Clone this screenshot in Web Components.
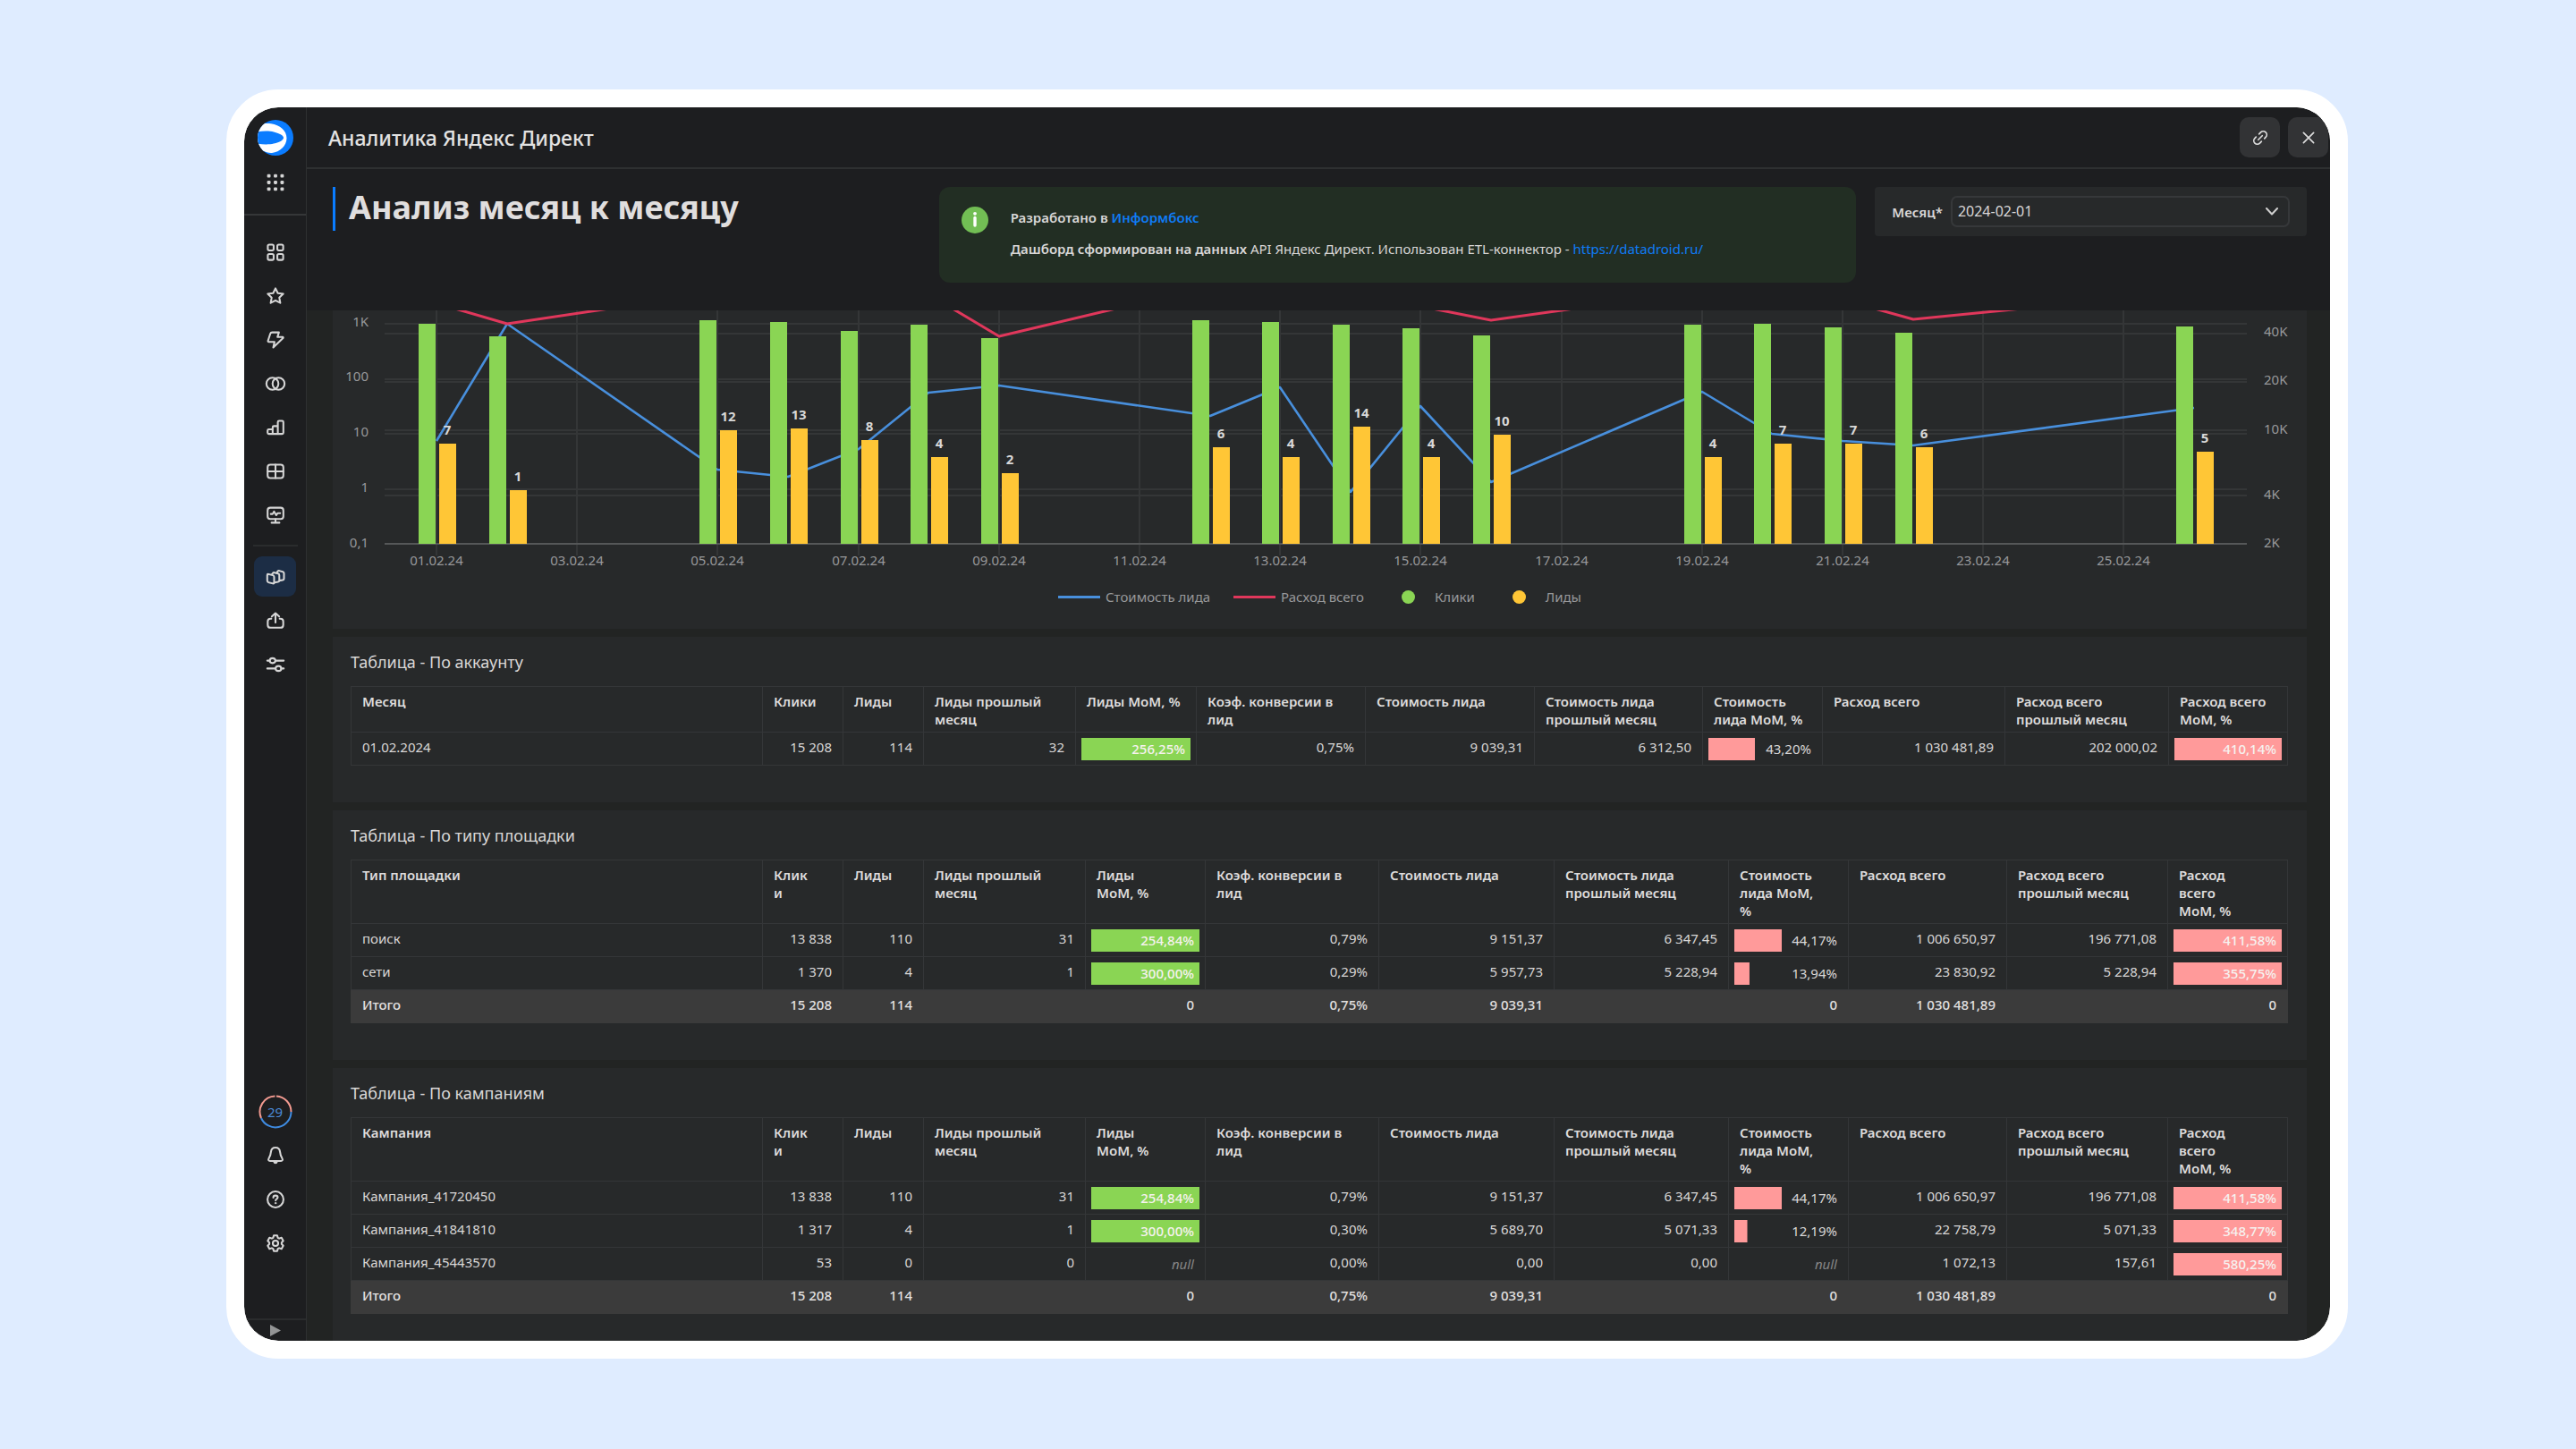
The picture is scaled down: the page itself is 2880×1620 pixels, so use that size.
<!DOCTYPE html>
<html lang="ru">
<head>
<meta charset="utf-8">
<title>Аналитика Яндекс Директ</title>
<style>
  html { height: 100%; }
  body {
    margin: 0;
    height: 100vh;
    box-sizing: border-box;
    padding: 100px 255px 101px 253px;
    background: #dfecff;
    color: #d9d7d7;
    font-family: "Noto Sans", "Open Sans", sans-serif;
    font-size: 15px;
    line-height: 20px;
    --bg: #1d1e20;
    --canvas: #222423;
    --panel: #27292a;
    --line: #2e3031;
    --link: #0f7bf5;
    --green: #8ad554;
    --yellow: #ffc636;
    --pink: #ff9a9a;
  }
</style>
</head>
<body>
<app-shell>
  <side-bar slot="side"></side-bar>
  <page-header slot="top">Аналитика Яндекс Директ</page-header>
  <title-bar slot="top">
    <span slot="title">Анализ месяц к месяцу</span>
    <info-note></info-note>
    <month-select label="Месяц*" value="2024-02-01"></month-select>
  </title-bar>
  <month-chart></month-chart>
  <data-panel heading="Таблица - По аккаунту"><data-grid source="account"></data-grid></data-panel>
  <data-panel heading="Таблица - По типу площадки"><data-grid source="place"></data-grid></data-panel>
  <data-panel heading="Таблица - По кампаниям"><data-grid source="campaign"></data-grid></data-panel>
</app-shell>

<script>
class AppShell extends HTMLElement {
  connectedCallback() {
    this.attachShadow({ mode: 'open' });
    this.shadowRoot.innerHTML = `
      <style>
        :host {
          display: grid;
          grid-template-columns: 70px 1fr;
          height: 100%;
          box-sizing: border-box;
          border: 20px solid #fff;
          border-radius: 58px;
          background: #fff;
          overflow: hidden;
        }
        .side, main { min-height: 0; overflow: hidden; }
        .side { border-radius: 38px 0 0 38px; background: var(--bg); display: grid; }
        main { border-radius: 0 38px 38px 0; background: var(--canvas); min-width: 0; }
        .top { background: var(--bg); }
        .cards {
          display: flex;
          flex-direction: column;
          gap: 9px;
          padding: 0 26px 0 29px;
        }
      </style>
      <div class="side"><slot name="side"></slot></div>
      <main>
        <div class="top"><slot name="top"></slot></div>
        <div class="cards"><slot></slot></div>
      </main>
    `;
  }
}
customElements.define('app-shell', AppShell);

const ICONS = {
  apps: '<g fill="currentColor" stroke="none">' + [2.6, 8, 13.4].map(y => [2.6, 8, 13.4].map(x => `<rect x="${x - 1.4}" y="${y - 1.4}" width="2.8" height="2.8" rx=".8"/>`).join('')).join('') + '</g>',
  cells: '<rect x="1.75" y="1.75" width="4.75" height="4.75" rx="1.2"/><rect x="9.5" y="1.75" width="4.75" height="4.75" rx="1.2"/><rect x="1.75" y="9.5" width="4.75" height="4.75" rx="1.2"/><rect x="9.5" y="9.5" width="4.75" height="4.75" rx="1.2"/>',
  star: '<path d="M8 1.7 9.9 5.6 14.3 6.2 11.1 9.2 11.9 13.6 8 11.5 4.1 13.6 4.9 9.2 1.7 6.2 6.1 5.6Z"/>',
  bolt: '<path d="M5.3 1.9h5.5L9.6 5.7h4.2c.5 0 .7.6.3.9L6.2 14.2l1-4.6H2.6c-.5 0-.8-.4-.7-.9l1.900-5.800c.2-.6.8-1 1.500-1Z"/>',
  rings: '<circle cx="5.5" cy="8" r="4.9"/><circle cx="10.5" cy="8" r="4.9"/>',
  bars: '<path d="M5.7 13.2H2.6c-.6 0-1-.4-1-1v-1.8c0-.6.4-1 1-1h3.1ZM5.7 13.2V7.8c0-.6.4-1 1-1h3.2v6.400ZM9.900 13.200V3.600c0-.6.4-1 1-1h2.500c.6 0 1 .4 1 1v8.600c0 .6-.4 1-1 1Z"/>',
  table: '<rect x="1.6" y="2.5" width="12.8" height="11" rx="2.2"/><path d="M8 2.5v11M1.6 8h12.8"/>',
  monitor: '<rect x="1.6" y="1.9" width="12.8" height="9.2" rx="2.2"/><path d="M4.2 7h1.5l1.1-2 1.8 3 1.1-1.600h2.100M8 11.200v2.600M4.800 14.100h6.400"/>',
  workbooks: '<rect x="-2.700" y="-3.400" width="5.600" height="6.800" rx="1.300" transform="translate(4 9.500) skewY(14)"/><path d="M5.200 5.700 6 4.800c.3-.3.700-.4 1.100-.3l3 .8c.6.2 1 .7 1 1.300v4.300c0 .6-.4 1-1 1.100L7.300 12.600M9.300 4.800l-.1-.6.700-.9c.3-.3.700-.4 1.100-.3l2.900.8c.6.2 1 .7 1 1.300v4.300c0 .6-.4 1-1 1.100l-2.700.5"/>',
  share: '<path d="M4.600 6.300H4c-1.300 0-2.300 1-2.300 2.300v2.800c0 1.300 1 2.300 2.300 2.300h8c1.300 0 2.300-1 2.300-2.300V8.600c0-1.300-1-2.300-2.300-2.300h-.6M8 9.500V1.900M5 4.600l3-2.800 3 2.800"/>',
  sliders: '<path d="M1.300 4.800h2M8 4.800h6.700M1.300 11.200h6.700M12.700 11.200h2"/><ellipse cx="5.600" cy="4.800" rx="2.300" ry="2"/><ellipse cx="10.400" cy="11.200" rx="2.300" ry="2"/>',
  bell: '<path d="M8 1.500c-2.200 0-3.500 1.500-3.700 3.500-.2 2.300-.5 3.400-1.700 5.200-.8 1.200-.2 2.200 1 2.200h8.800c1.200 0 1.800-1 1-2.200-1.200-1.800-1.500-2.900-1.700-5.200C11.500 3 10.200 1.500 8 1.500Z"/><path d="M6 12.800c.4 1.500 1 2 2 2s1.600-.5 2-2Z" fill="currentColor" stroke="none"/>',
  help: '<circle cx="8" cy="8" r="6.500"/><path d="M6.200 6.500c0-1 .8-1.700 1.800-1.700s1.800.7 1.800 1.600c0 1.100-1.700 1.300-1.700 2.400"/><circle cx="8.050" cy="11" r=".6" fill="currentColor" stroke-width=".5"/>',
  gear: '<circle cx="8" cy="8" r="2.200"/><path d="M6.600 1.600h2.800l.5 1.900 1.100.6 1.900-.6 1.400 2.500L13 7.400v1.200l1.300 1.400-1.400 2.500-1.900-.6-1.100.6-.5 1.900H6.600l-.5-1.900-1.100-.6-1.900.6L1.700 10 3 8.600V7.400L1.700 6l1.400-2.500 1.900.6 1.100-.6Z"/>',
  link: '<path d="M6.800 4.300 8.500 2.600a3.400 3.400 0 0 1 4.900 4.900l-1.200 1.200M9.200 11.700l-1.700 1.700a3.400 3.400 0 0 1-4.900-4.900l1.200-1.200M6 10l4-4"/>',
  close: '<path d="M3 3l10 10M13 3 3 13"/>'
};
const icon = (name, size = 22) =>
  `<svg width="${size}" height="${size}" viewBox="0 0 16 16" fill="none" stroke="currentColor" stroke-width="1.5" stroke-linejoin="round" stroke-linecap="round" overflow="visible" aria-hidden="true">${ICONS[name]}</svg>`;

class SideBar extends HTMLElement {
  connectedCallback() {
    const item = (name, label, cls = '') => `<button class="${cls}" aria-label="${label}">${icon(name)}</button>`;
    this.attachShadow({ mode: 'open' });
    this.shadowRoot.innerHTML = `
      <style>
        :host {
          display: flex;
          flex-direction: column;
          box-sizing: border-box;
          border-right: 1px solid var(--line);
        }
        .logo { display: grid; justify-content: center; padding-top: 14px; height: 40px; }
        nav, .foot {
          display: flex;
          flex-direction: column;
          align-items: center;
          gap: 4px;
        }
        .brand { border-bottom: 2px solid #353738; padding: 7px 0 13px; }
        .main { padding-top: 18px; }
        button {
          display: grid;
          place-items: center;
          width: 47px;
          height: 45px;
          padding: 0;
          border: 0;
          border-radius: 9px;
          background: none;
          color: #d6d6d6;
          font: inherit;
        }
        button.active { background: #1c2d45; }
        hr { width: 50px; margin: 7px 0; border: 0; border-top: 2px solid #2a2c2d; }
        .foot { margin-top: auto; }
        .ring { color: #4b8bd8; }
        .ring svg, .ring span { grid-area: 1 / 1; }
        .expand {
          width: 100%;
          height: 25px;
          margin-top: 62px;
          border-top: 2px solid #2a2c2d;
          border-radius: 0;
          color: #949596;
        }
      </style>
      <a class="logo" href="#" aria-label="DataLens">
        <svg width="40" height="40" viewBox="0 0 40 40">
          <defs><clipPath id="disc"><circle cx="20" cy="20" r="20"/></clipPath></defs>
          <g clip-path="url(#disc)">
            <rect width="40" height="40" fill="#0a7cff"/>
            <path d="M-2 6C4 4 10 3.500 15 4.200 25 5.500 32.500 12 32.500 20.500S25 36 16 37C10 37.500 4 34 -2 30Z" fill="#fff"/>
            <path d="M-2 13.500C6 12.200 13 12 18 13.500 25 15.500 29 17.500 29 20s-4 5-11 6.500C13 27.800 6 27.600 -2 26.500Z" fill="#0a7cff"/>
          </g>
        </svg>
      </a>
      <nav class="brand">${item('apps', 'Сервисы')}</nav>
      <nav class="main">
        ${item('cells', 'Коллекции')}
        ${item('star', 'Избранное')}
        ${item('bolt', 'Подключения')}
        ${item('rings', 'Датасеты')}
        ${item('bars', 'Чарты')}
        ${item('table', 'Дашборды')}
        ${item('monitor', 'Мониторинг')}
        <hr>
        ${item('workbooks', 'Воркбуки', 'active')}
        ${item('share', 'Экспорт')}
        ${item('sliders', 'Параметры')}
      </nav>
      <div class="foot">
        <button class="ring" aria-label="Дни">
          <svg width="38" height="38" viewBox="0 0 38 38" fill="none" stroke-width="2">
            <path d="M20 1.500A17.500 17.500 0 0 1 36.500 19" stroke="#f29a90"/>
            <path d="M36.500 19A17.500 17.500 0 0 1 3 26" stroke="#3f8be0"/>
            <path d="M3 26A17.500 17.500 0 0 1 18.500 1.500" stroke="#f29a90"/>
          </svg>
          <span>29</span>
        </button>
        ${item('bell', 'Уведомления')}
        ${item('help', 'Помощь')}
        ${item('gear', 'Настройки')}
      </div>
      <button class="expand" aria-label="Развернуть">
        <svg width="12" height="13" viewBox="0 0 12 13"><path d="M0 0 12 6.500 0 13Z" fill="currentColor"/></svg>
      </button>
    `;
  }
}
customElements.define('side-bar', SideBar);

class PageHeader extends HTMLElement {
  connectedCallback() {
    this.attachShadow({ mode: 'open' });
    this.shadowRoot.innerHTML = `
      <style>
        :host {
          display: flex;
          align-items: center;
          gap: 9px;
          height: 67px;
          padding: 0 2px 0 24px;
          border-bottom: 2px solid var(--line);
        }
        h1 { flex: 1; margin: 0; font-size: 23px; line-height: 32px; font-weight: 500; color: #e2e2e2; }
        button {
          display: grid;
          place-items: center;
          width: 45px;
          height: 45px;
          padding: 0;
          border: 0;
          border-radius: 10px;
          background: #323335;
          color: #dcdcdc;
        }
      </style>
      <h1><slot></slot></h1>
      <button aria-label="Скопировать ссылку">${icon('link', 18)}</button>
      <button aria-label="Закрыть">${icon('close', 18)}</button>
    `;
  }
}
customElements.define('page-header', PageHeader);

class TitleBar extends HTMLElement {
  connectedCallback() {
    this.attachShadow({ mode: 'open' });
    this.shadowRoot.innerHTML = `
      <style>
        :host {
          display: grid;
          grid-template-columns: 657fr 1026fr 483fr;
          column-gap: 21px;
          align-items: start;
          height: 138px;
          padding: 20px 26px 0 29px;
        }
        h2 {
          margin: 0;
          padding: 0 0 3px 15px;
          border-left: 3px solid #0a7cff;
          font-size: 36px;
          line-height: 46px;
          font-weight: 700;
          color: #e0dede;
        }
      </style>
      <h2><slot name="title"></slot></h2>
      <slot></slot>
    `;
  }
}
customElements.define('title-bar', TitleBar);

class InfoNote extends HTMLElement {
  connectedCallback() {
    this.attachShadow({ mode: 'open' });
    this.shadowRoot.innerHTML = `
      <style>
        :host {
          display: flex;
          gap: 25px;
          padding: 22px 25px 25px;
          border-radius: 12px;
          background: #222e23;
        }
        p { margin: 0 0 10px; line-height: 25px; }
        p:last-child { margin: 0; }
        b { font-weight: 600; }
        a { color: var(--link); text-decoration: none; }
      </style>
      <svg width="30" height="30" viewBox="0 0 30 30" aria-hidden="true">
        <circle cx="15" cy="15" r="15" fill="#72be54"/>
        <path d="M15 12.500v8.500" stroke="#fff" stroke-width="3.400" stroke-linecap="round"/>
        <circle cx="15" cy="7.800" r="1.900" fill="#fff"/>
      </svg>
      <div>
        <p><b>Разработано в <a href="#">Информбокс</a></b></p>
        <p><b>Дашборд сформирован на данных</b> API Яндекс Директ. Использован ETL-коннектор - <a href="#">https://datadroid.ru/</a></p>
      </div>
    `;
  }
}
customElements.define('info-note', InfoNote);

class MonthSelect extends HTMLElement {
  connectedCallback() {
    this.attachShadow({ mode: 'open' });
    this.shadowRoot.innerHTML = `
      <style>
        :host {
          display: flex;
          align-items: center;
          gap: 9px;
          padding: 10px 19px;
          border-radius: 4px;
          background: var(--panel);
        }
        label { font-weight: 600; }
        .box { flex: 1; display: grid; align-items: center; }
        select {
          grid-area: 1 / 1;
          appearance: none;
          width: 100%;
          height: 35px;
          padding: 0 6px 2px;
          border: 2px solid #36383a;
          border-radius: 7px;
          background: none;
          color: inherit;
          font: inherit;
          font-size: 16px;
        }
        svg { grid-area: 1 / 1; justify-self: end; margin-right: 13px; pointer-events: none; }
      </style>
      <label for="month">${this.getAttribute('label')}</label>
      <div class="box">
        <select id="month"><option>${this.getAttribute('value')}</option></select>
        <svg width="14" height="9" viewBox="0 0 14 9" fill="none" stroke="#cfcfcf" stroke-width="2" stroke-linecap="round" stroke-linejoin="round"><path d="M1 1l6 6.500L13 1"/></svg>
      </div>
    `;
  }
}
customElements.define('month-select', MonthSelect);

// day of month, y of the clicks bar top, leads
const DAYS = [
  [1, 15, 7], [2, 29, 1], [5, 11, 12], [6, 13, 13], [7, 23, 8], [8, 16, 4], [9, 31, 2],
  [12, 11, 6], [13, 13, 4], [14, 16, 14], [15, 20, 4], [16, 28, 10],
  [19, 16, 4], [20, 15, 7], [21, 19, 7], [22, 25, 6], [26, 18, 5]
];
const LEAD_COST = [[1, 146], [2, 15], [5, 178], [6, 186], [7, 155], [8, 92], [9, 84], [12, 118], [13, 86],
  [14, 203], [15, 107], [16, 192], [19, 91], [20, 138], [21, 146], [22, 151], [26, 109]];
// total cost runs above the visible part between these dips
const SPEND = [[1, -8], [2, 15], [5, -20], [8, -18], [9, 29], [12, -27], [14, -20], [16, 11], [19, -22], [21, -12], [22, 10], [26, -21]];

class MonthChart extends HTMLElement {
  connectedCallback() {
    const x = day => Math.round(116 + 78.6 * (day - 1));
    const base = 261;
    const line = (pts, color, w) => `<polyline points="${pts.map(([d, y]) => x(d) + ',' + y).join(' ')}" fill="none" stroke="${color}" stroke-width="${w}" stroke-linejoin="round"/>`;
    const rules = [15, 26, 77, 80, 134, 138, 200, 207]
      .map(y => `<path d="M58 ${y}H2140" stroke="#343637" stroke-width="2"/>`).join('');
    const ticks = [1, 3, 5, 7, 9, 11, 13, 15, 17, 19, 21, 23, 25].map(d => `
      <path d="M${x(d)} 0V274" stroke="#343637" stroke-width="2"/>
      <text x="${x(d)}" y="285" text-anchor="middle">${String(d).padStart(2, '0')}.02.24</text>`).join('');
    const bars = DAYS.map(([d, top, leads]) => {
      const y = Math.round(201 - 62 * Math.log10(leads));
      return `
        <rect x="${x(d) - 20}" y="${top}" width="19" height="${base - top}" fill="var(--green)"/>
        <rect x="${x(d) + 3}" y="${y}" width="19" height="${base - y}" fill="var(--yellow)"/>
        <text class="val" x="${x(d) + 12}" y="${y - 10}" text-anchor="middle">${leads}</text>`;
    }).join('');
    const left = [['1K', 18], ['100', 79], ['10', 141], ['1', 203], ['0,1', 265]]
      .map(([t, y]) => `<text x="40" y="${y}" text-anchor="end">${t}</text>`).join('');
    const right = [['40K', 29], ['20K', 83], ['10K', 138], ['4K', 211], ['2K', 265]]
      .map(([t, y]) => `<text x="2159" y="${y}">${t}</text>`).join('');

    this.attachShadow({ mode: 'open' });
    this.shadowRoot.innerHTML = `
      <style>
        :host { display: block; background: var(--panel); color: #97989a; padding-bottom: 26px; }
        svg { display: block; width: 100%; }
        text { fill: currentColor; }
        .val { fill: #d8d8d8; font-weight: 700; }
        ul {
          display: flex;
          justify-content: center;
          gap: 26px;
          margin: 0;
          padding: 0;
          list-style: none;
        }
        li { display: flex; align-items: center; gap: 6px; }
        i { width: 47px; height: 3px; background: var(--c); }
        i.dot { width: 15px; height: 15px; margin: 0 16px; border-radius: 50%; }
      </style>
      <svg viewBox="0 0 2207 310" role="img" aria-label="Клики, лиды и расходы по дням">
        ${rules}${ticks}
        <path d="M58 261H2140" stroke="#555758" stroke-width="2"/>
        ${line(LEAD_COST, '#488fdc', 2.6)}${line(SPEND, '#e0375b', 3)}
        ${bars}${left}${right}
      </svg>
      <ul>
        <li><i style="--c: #488fdc"></i>Стоимость лида</li>
        <li><i style="--c: #e0375b"></i>Расход всего</li>
        <li><i class="dot" style="--c: var(--green)"></i>Клики</li>
        <li><i class="dot" style="--c: var(--yellow)"></i>Лиды</li>
      </ul>
    `;
  }
}
customElements.define('month-chart', MonthChart);

class DataPanel extends HTMLElement {
  connectedCallback() {
    this.attachShadow({ mode: 'open' });
    this.shadowRoot.innerHTML = `
      <style>
        :host { display: block; padding: 16px 22px 41px 20px; background: var(--panel); }
        h3 { margin: 0 0 15px; font-size: 18px; line-height: 24px; font-weight: 400; }
      </style>
      <h3>${this.getAttribute('heading')}</h3>
      <slot></slot>
    `;
  }
}
customElements.define('data-panel', DataPanel);

const METRICS = ['Клики', 'Лиды', 'Лиды прошлый месяц', 'Лиды MoM, %', 'Коэф. конверсии в лид', 'Стоимость лида',
  'Стоимость лида прошлый месяц', 'Стоимость лида MoM, %', 'Расход всего', 'Расход всего прошлый месяц', 'Расход всего MoM, %'];
const NARROW = { 'Клики': 'Клик\nи', 'Лиды MoM, %': 'Лиды\nMoM, %', 'Стоимость лида MoM, %': 'Стоимость\nлида MoM,\n%', 'Расход всего MoM, %': 'Расход\nвсего\nMoM, %' };
const WIDE = [460, 90, 90, 181, 134, 194, 196, 195, 134, 177, 180, 134];
const GRIDS = {
  account: {
    cols: [460, 90, 90, 170, 135, 189, 189, 188, 134, 204, 183, 133],
    first: 'Месяц',
    heads: METRICS,
    rows: [['01.02.2024', '15 208', '114', '32', '256,25%', '0,75%', '9 039,31', '6 312,50', '43,20%', '1 030 481,89', '202 000,02', '410,14%']]
  },
  place: {
    cols: WIDE,
    first: 'Тип площадки',
    heads: METRICS.map(t => NARROW[t] || t),
    rows: [
      ['поиск', '13 838', '110', '31', '254,84%', '0,79%', '9 151,37', '6 347,45', '44,17%', '1 006 650,97', '196 771,08', '411,58%'],
      ['сети', '1 370', '4', '1', '300,00%', '0,29%', '5 957,73', '5 228,94', '13,94%', '23 830,92', '5 228,94', '355,75%']
    ],
    total: ['Итого', '15 208', '114', '', '0', '0,75%', '9 039,31', '', '0', '1 030 481,89', '', '0']
  },
  campaign: {
    cols: WIDE,
    first: 'Кампания',
    heads: METRICS.map(t => NARROW[t] || t),
    rows: [
      ['Кампания_41720450', '13 838', '110', '31', '254,84%', '0,79%', '9 151,37', '6 347,45', '44,17%', '1 006 650,97', '196 771,08', '411,58%'],
      ['Кампания_41841810', '1 317', '4', '1', '300,00%', '0,30%', '5 689,70', '5 071,33', '12,19%', '22 758,79', '5 071,33', '348,77%'],
      ['Кампания_45443570', '53', '0', '0', 'null', '0,00%', '0,00', '0,00', 'null', '1 072,13', '157,61', '580,25%']
    ],
    total: ['Итого', '15 208', '114', '', '0', '0,75%', '9 039,31', '', '0', '1 030 481,89', '', '0']
  }
};

class DataGrid extends HTMLElement {
  connectedCallback() {
    const grid = GRIDS[this.getAttribute('source')];
    const cell = (text, i) => {
      if (![4, 8, 11].includes(i)) return `<td>${text}</td>`;
      if (text === 'null') return '<td class="null">null</td>';
      const pct = Math.min(100, parseFloat(text.replace(',', '.')));
      return `<td class="bar"><div class="${pct === 100 ? 'full' : ''}" style="--w: ${Math.round(pct)}%; --c: var(${i === 4 ? '--green' : '--pink'})">${text}</div></td>`;
    };
    this.attachShadow({ mode: 'open' });
    this.shadowRoot.innerHTML = `
      <style>
        :host { display: block; }
        table { width: 100%; table-layout: fixed; border-collapse: collapse; }
        th, td {
          padding: 6px 12px 10px;
          border: 1px solid #343638;
          text-align: right;
          vertical-align: top;
          white-space: nowrap;
        }
        th {
          padding-bottom: 4px;
          text-align: left;
          white-space: pre-line;
          font-weight: 600;
          color: #dedcdc;
        }
        td:first-child { text-align: left; }
        td.bar { padding: 6px 6px 5px; }
        .bar div {
          height: 25px;
          box-sizing: border-box;
          padding: 2px 6px;
          background: linear-gradient(var(--c) 0 0) left / var(--w) 100% no-repeat;
        }
        .bar .full { color: #f6f2f0; font-weight: 500; }
        .null { padding-top: 8px; padding-bottom: 8px; color: #858686; font-style: italic; }
        tfoot td { border-color: #3b3b3b; background: #3b3b3b; font-weight: 500; color: #e2e0e0; }
      </style>
      <table>
        <colgroup>${grid.cols.map(w => `<col style="width: ${w}px">`).join('')}</colgroup>
        <thead><tr>${[grid.first, ...grid.heads].map(t => `<th scope="col">${t}</th>`).join('')}</tr></thead>
        <tbody>${grid.rows.map(r => `<tr>${r.map(cell).join('')}</tr>`).join('')}</tbody>
        ${grid.total ? `<tfoot><tr>${grid.total.map(t => `<td>${t}</td>`).join('')}</tr></tfoot>` : ''}
      </table>
    `;
  }
}
customElements.define('data-grid', DataGrid);
</script>
</body>
</html>
